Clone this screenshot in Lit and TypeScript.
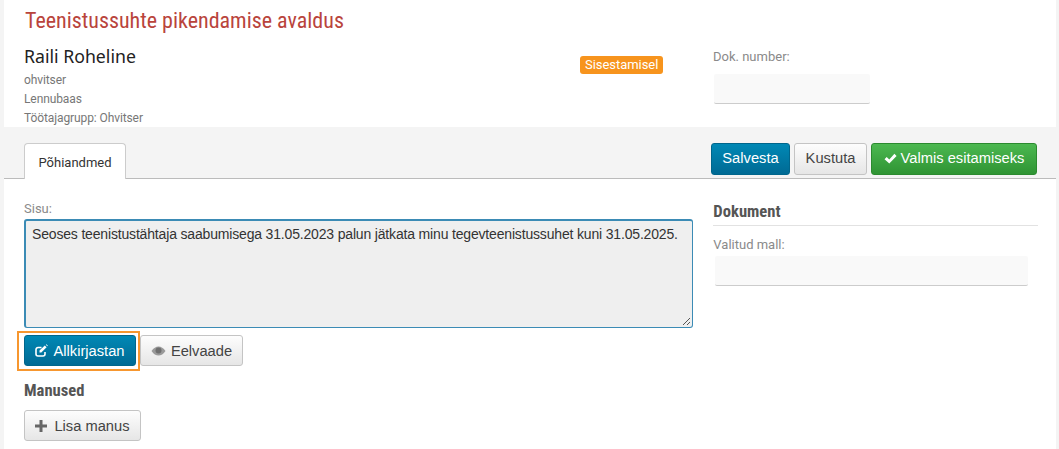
import { LitElement, html, css } from 'lit';
import { customElement } from 'lit/decorators.js';

@customElement('app-root')
export class AppRoot extends LitElement {
  static styles = css`
    :host {
      display: block;
      height: 449px;
      overflow: hidden;
      background: #f4f4f4;
      padding: 0 3px 0 4px;
      box-sizing: border-box;
      font-family: 'Liberation Sans', Arial, sans-serif;
      color: #333;
    }

    .page {
      background: #fff;
      height: 449px;
    }

    .title {
      height: 41px;
      padding: 8px 0 0 21px;
      box-sizing: border-box;
      font-family: 'Roboto', sans-serif;
      font-stretch: condensed;
      font-size: 22px;
      line-height: 26px;
      color: #b9443c;
    }

    .head {
      display: flex;
      height: 86px;
      padding-left: 20px;
    }

    .person {
      width: 556px;
      font-family: 'Roboto', sans-serif;
      font-size: 12px;
      letter-spacing: -0.1px;
      line-height: 19px;
      color: #777;
    }

    .name {
      font-family: 'Noto Sans', sans-serif;
      font-size: 17.7px;
      letter-spacing: 0;
      line-height: 27px;
      color: #222;
      padding-top: 2px;
      margin-bottom: 1px;
    }

    .status {
      width: 133px;
      padding-top: 14px;
    }

    .badge {
      display: inline-block;
      height: 18px;
      padding: 0 5px;
      line-height: 18px;
      border-radius: 3px;
      background: #f7941d;
      color: #fff;
      font-family: 'Roboto', sans-serif;
      font-size: 13px;
      letter-spacing: -0.05px;
    }

    .label {
      font-family: 'Roboto', sans-serif;
      font-size: 13px;
      color: #8a8a8a;
      line-height: 14px;
    }

    .doknr {
      padding-top: 9px;
    }

    .doknr .field {
      width: 156px;
      margin: 10px 0 0 1px;
    }

    .field {
      height: 30px;
      box-sizing: border-box;
      background: #f9f9f9;
      border-bottom: 1px solid #ccc;
      border-radius: 2px;
    }

    .tabs {
      display: flex;
      justify-content: space-between;
      height: 52px;
      box-sizing: border-box;
      padding: 16px 19px 0 20px;
      background: #f4f4f4;
      border-bottom: 1px solid #bbb;
    }

    .tab {
      width: 102px;
      height: 36px;
      box-sizing: border-box;
      background: #fff;
      border: 1px solid #ccc;
      border-bottom: none;
      border-radius: 4px 4px 0 0;
      text-align: center;
      font-family: 'Roboto', sans-serif;
      font-size: 13px;
      line-height: 37px;
      color: #333;
    }

    .actions {
      display: flex;
      gap: 4px;
    }

    .btn {
      display: inline-flex;
      align-items: center;
      justify-content: center;
      gap: 5px;
      height: 31px;
      box-sizing: border-box;
      border: 1px solid #c4c4c4;
      border-radius: 3px;
      background: linear-gradient(#fdfdfd, #e6e6e6);
      font-family: 'Liberation Sans', Arial, sans-serif;
      font-size: 14.7px;
      color: #444;
    }

    .actions .btn {
      height: 32px;
      padding-bottom: 2px;
    }

    .btn svg {
      display: block;
    }

    .primary {
      border-color: #00668c;
      background: linear-gradient(#0088b5, #006a94);
      color: #fff;
    }

    .success {
      border-color: #2b8a2f;
      background: linear-gradient(#4cb850, #2f9434);
      color: #fff;
    }

    .save { width: 79px; }
    .remove { width: 73px; }
    .ready { width: 166px; gap: 4px; }
    .sign { width: 112px; }
    .preview { width: 103px; }
    .attach { width: 117px; gap: 7px; }

    .body {
      display: flex;
      padding: 23px 18px 0 20px;
    }

    .main {
      width: 670px;
    }

    .side {
      width: 325px;
      margin-left: 20px;
    }

    .content {
      height: 109px;
      box-sizing: border-box;
      margin-top: 3px;
      padding: 5px 6px;
      position: relative;
      background: #efefef;
      border: 1px solid #3b8bb5;
      border-width: 2px 1px 1px 2px;
      border-radius: 3px;
      font-size: 14px;
      letter-spacing: -0.17px;
      line-height: 17px;
      color: #333;
    }

    .grip {
      position: absolute;
      right: 1px;
      bottom: 1px;
    }

    .row {
      display: flex;
      gap: 4px;
      margin-top: 7px;
    }

    .highlight {
      position: relative;
    }

    .highlight::after {
      content: '';
      position: absolute;
      inset: -4px -4px -5px -7px;
      border: 2px solid #f7972f;
    }

    .heading {
      font-family: 'Roboto', sans-serif;
      font-size: 16.6px;
      font-weight: 700;
      font-stretch: condensed;
      line-height: 18px;
      color: #555;
    }

    .manused {
      margin-top: 16px;
      margin-bottom: 10px;
    }

    .side .heading {
      padding-bottom: 4px;
      border-bottom: 1px solid #e2e2e2;
      margin: 1px 0 12px;
    }

    .side .field {
      width: 313px;
      margin: 4px 0 0 2px;
    }
  `;

  render() {
    return html`
      <div class="page">
        <div class="title">Teenistussuhte pikendamise avaldus</div>
        <div class="head">
          <div class="person">
            <div class="name">Raili Roheline</div>
            <div>ohvitser</div>
            <div>Lennubaas</div>
            <div>Töötajagrupp: Ohvitser</div>
          </div>
          <div class="status"><span class="badge">Sisestamisel</span></div>
          <div class="doknr">
            <div class="label">Dok. number:</div>
            <div class="field"></div>
          </div>
        </div>
        <div class="tabs">
          <div class="tab">Põhiandmed</div>
          <div class="actions">
            <div class="btn primary save">Salvesta</div>
            <div class="btn remove">Kustuta</div>
            <div class="btn success ready">
              <svg width="13" height="11" viewBox="0 0 13 11"><path d="M.5 6.200l2.200-2.200 2.600 2.600L10.400.8l2.200 2.200-7.300 7.600z" fill="#fff"/></svg>
              Valmis esitamiseks
            </div>
          </div>
        </div>
        <div class="body">
          <div class="main">
            <div class="label">Sisu:</div>
            <div class="content">
              Seoses teenistustähtaja saabumisega 31.05.2023 palun jätkata minu tegevteenistussuhet kuni 31.05.2025.
              <svg class="grip" width="9" height="9" viewBox="0 0 9 9"><path d="M1 8l7-7M5 8l3-3" stroke="#555" fill="none"/></svg>
            </div>
            <div class="row">
              <div class="highlight">
                <div class="btn primary sign">
                  <svg width="13" height="13" viewBox="0 0 13 13"><path d="M10 8v2a2 2 0 0 1-2 2H3a2 2 0 0 1-2-2V5.500a2 2 0 0 1 2-2h3.500" stroke="#fff" stroke-width="1.600" fill="none"/><path d="M4.500 6.500 9.800 1.500l1.800 1.800-5.300 5.200H4.500z" fill="#fff"/><path d="M10.800.7l.6-.5 1.500 1.500-.6.6z" fill="#fff"/></svg>
                  Allkirjastan
                </div>
              </div>
              <div class="btn preview">
                <svg width="15" height="10" viewBox="0 0 15 10"><path d="M.5 5C2.500 2 5 .5 7.500.5S12.500 2 14.500 5c-2 3-4.500 4.500-7 4.500S2.500 8 .5 5z" fill="#9a9a9a"/><circle cx="7.500" cy="4.600" r="3" fill="#6f6f6f"/></svg>
                Eelvaade
              </div>
            </div>
            <div class="heading manused">Manused</div>
            <div class="btn attach">
              <svg width="12" height="12" viewBox="0 0 12 12"><path d="M4.500 0h3v4.500H12v3H7.500V12h-3V7.500H0v-3h4.500z" fill="#666"/></svg>
              Lisa manus
            </div>
          </div>
          <div class="side">
            <div class="heading">Dokument</div>
            <div class="label">Valitud mall:</div>
            <div class="field"></div>
          </div>
        </div>
      </div>
    `;
  }
}
